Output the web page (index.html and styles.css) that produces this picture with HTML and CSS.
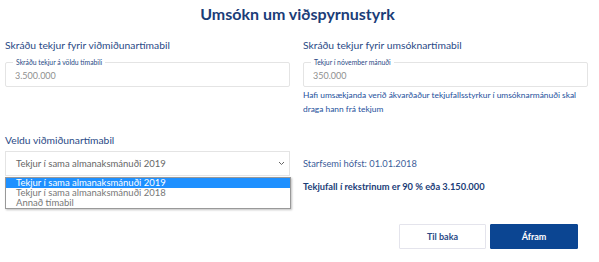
FILE: index.html
```html
<!DOCTYPE html>
<html lang="is">
<head>
  <meta charset="UTF-8" />
  <title>Umsókn um viðspyrnustyrk</title>
  <link rel="stylesheet" href="styles.css">
</head>
<body>

  <h1 class="title">Umsókn um viðspyrnustyrk</h1>

  <section class="grid">
    <div class="field">
      <div class="field-label">Skráðu tekjur fyrir viðmiðunartímabil</div>
      <div class="box">
        <span class="box-label">Skráðu tekjur á völdu tímabili</span>
        <span class="value">3.500.000</span>
      </div>
    </div>

    <div class="field">
      <div class="field-label">Skráðu tekjur fyrir umsóknartímabil</div>
      <div class="box">
        <span class="box-label">Tekjur í nóvember mánuði</span>
        <span class="value">350.000</span>
      </div>
      <p class="hint">Hafi umsækjanda verið ákvarðaður tekjufallsstyrkur í umsóknarmánuði skal draga hann frá tekjum</p>
    </div>

    <div class="field period">
      <div class="field-label">Veldu viðmiðunartímabil</div>
      <div class="select">
        <span>Tekjur í sama almanaksmánuði 2019</span>
        <svg class="chevron" width="7" height="5" viewBox="0 0 7 5"><path d="M1 1l2.5 2.5L6 1" fill="none" stroke="#666" stroke-width="1"/></svg>
        <ul class="options">
          <li class="active">Tekjur í sama almanaksmánuði 2019</li>
          <li>Tekjur í sama almanaksmánuði 2018</li>
          <li>Annað tímabil</li>
        </ul>
      </div>
    </div>

    <div class="field summary">
      <p class="started">Starfsemi hófst: 01.01.2018</p>
      <p class="drop">Tekjufall í rekstrinum er 90 % eða 3.150.000</p>
    </div>
  </section>

  <div class="actions">
    <button class="btn btn-back">Til baka</button>
    <button class="btn btn-next">Áfram</button>
  </div>

</body>
</html>
```

FILE: styles.css
```css
* {
  box-sizing: border-box;
  margin: 0;
  padding: 0;
}

body {
  font-family: Lato, "Open Sans", sans-serif;
  background: #fff;
  color: #1f3f7a;
  width: 599px;
}

.title {
  text-align: center;
  font-size: 16px;
  font-weight: 700;
  color: #1b3d78;
  line-height: 24px;
  padding-top: 2px;
  margin-right: 4px;
}

.grid {
  display: grid;
  grid-template-columns: 285px 285px;
  column-gap: 13px;
  row-gap: 17px;
  padding: 12px 0 0 5px;
}

.field-label {
  font-size: 10.3px;
  line-height: 14px;
  color: #2a4a86;
  margin-bottom: 10px;
}

.box {
  position: relative;
  border: 1px solid #e4e4e4;
  border-radius: 2px;
  height: 25px;
  padding: 0 9px;
  display: flex;
  align-items: center;
}

.box-label {
  position: absolute;
  top: -5px;
  left: 7px;
  padding: 0 3px;
  background: #fff;
  font-size: 6.8px;
  line-height: 8px;
  color: #2a4a86;
}

.value {
  font-size: 9px;
  color: #8f8f8f;
  margin-top: 1px;
}

.hint {
  font-size: 8.4px;
  line-height: 14px;
  color: #1d4f9c;
  margin-top: 1px;
}

.period .field-label {
  margin-bottom: 4px;
}

.select {
  position: relative;
  border: 1px solid #e4e4e4;
  height: 25px;
  display: flex;
  align-items: center;
  justify-content: space-between;
  padding: 0 4px 0 10px;
  font-size: 9.5px;
  color: #666;
}

.options {
  position: absolute;
  top: 25px;
  left: -1px;
  right: -2px;
  list-style: none;
  background: #fff;
  border: 1px solid #999;
  box-shadow: 1px 1px 2px rgba(0, 0, 0, 0.25);
  font-size: 9.5px;
  line-height: 10px;
  color: #777;
}

.options li {
  padding-left: 10px;
}

.options li.active {
  background: #1e90ff;
  color: #fff;
}

.summary {
  padding-top: 24px;
}

.started {
  font-size: 9.3px;
  line-height: 14px;
  color: #3b5d99;
}

.drop {
  font-size: 9.3px;
  line-height: 14px;
  font-weight: 700;
  color: #1b3d78;
  margin-top: 9px;
}

.actions {
  display: flex;
  justify-content: flex-end;
  gap: 4px;
  padding: 30px 21px 0 0;
}

.btn {
  font-family: Lato, "Open Sans", sans-serif;
  font-size: 9px;
  font-weight: 700;
  width: 87px;
  height: 25px;
  border-radius: 1px;
  cursor: pointer;
}

.btn-back {
  background: #fff;
  color: #2a4a86;
  border: 1px solid #e4e4ec;
}

.btn-next {
  background: #0b4592;
  color: #fff;
  border: 1px solid #0b4592;
  width: 88px;
}
```
